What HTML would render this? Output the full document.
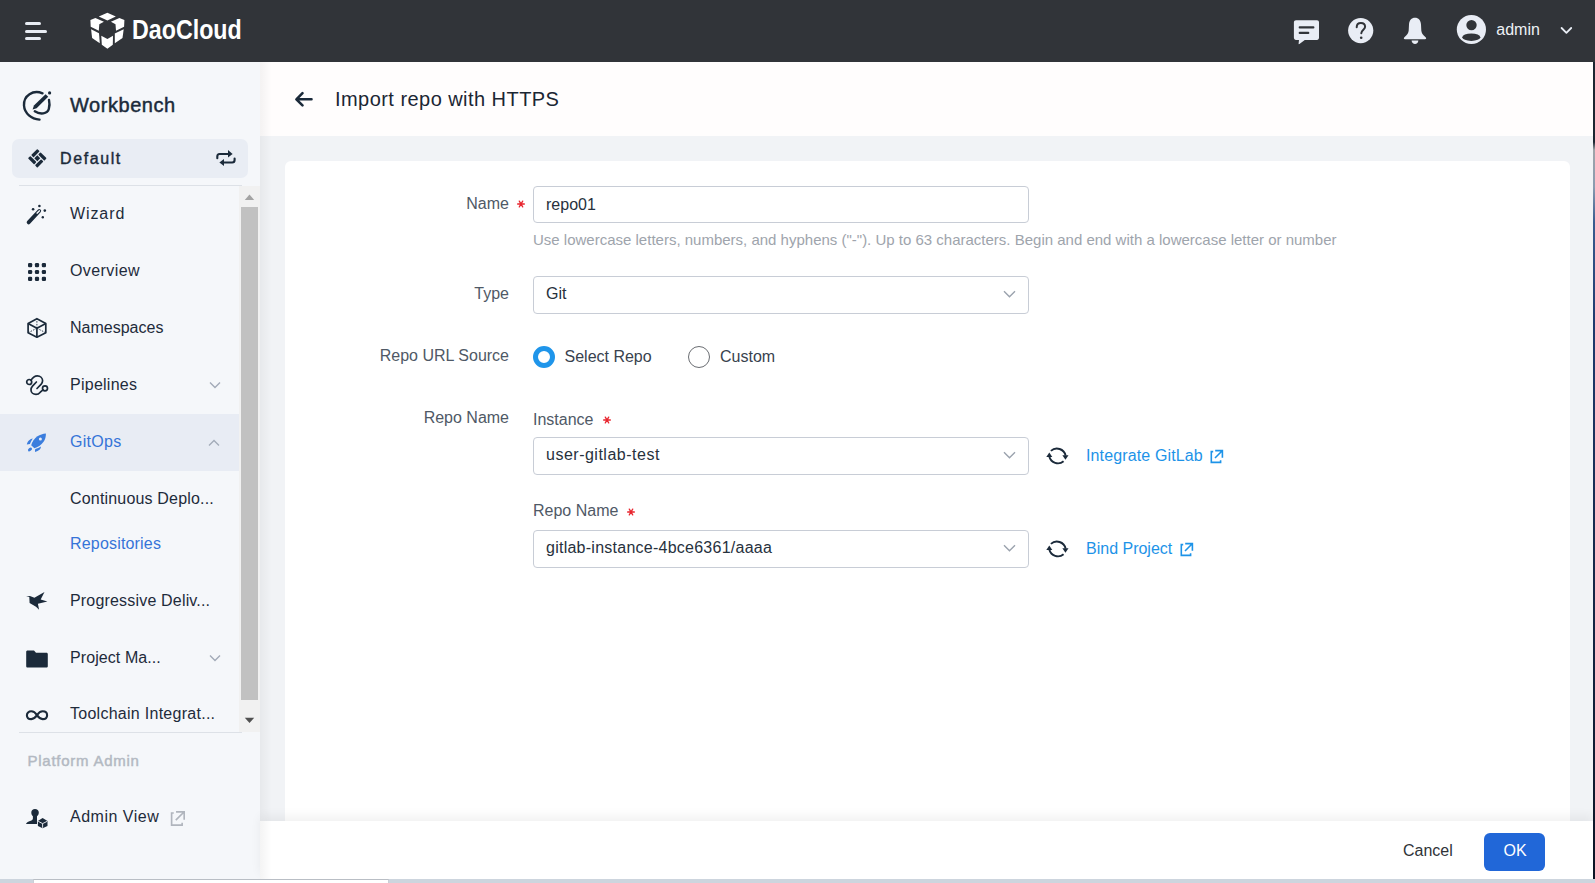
<!DOCTYPE html>
<html><head><meta charset="utf-8">
<style>
*{box-sizing:border-box;margin:0;padding:0}
html,body{width:1595px;height:883px;overflow:hidden;background:#f1f3f6;font-family:"Liberation Sans",sans-serif;}
.abs{position:absolute}
.t{position:absolute;white-space:nowrap;line-height:1}
#top{position:absolute;left:0;top:0;width:1595px;height:62px;background:#313439}
#side{position:absolute;left:0;top:62px;width:260px;height:817px;background:#f5f7fa}
#shadow{position:absolute;left:260px;top:62px;width:12px;height:817px;background:linear-gradient(to right,rgba(0,0,0,0.045),rgba(0,0,0,0))}
#hdr{position:absolute;left:260px;top:62px;width:1333px;height:74px;background:#fffdfd}
#card{position:absolute;left:285px;top:161px;width:1285px;height:700px;background:#fff;border-radius:6px}
#foot{position:absolute;left:260px;top:821px;width:1333px;height:58px;background:#fff;box-shadow:0 -5px 10px rgba(0,0,0,0.055)}
.nav{color:#1e2b3b;font-size:16px}
.lbl{color:#4f5966;font-size:16px}
.inp{position:absolute;left:533px;width:496px;height:37px;border:1px solid #c8cdd6;border-radius:4px;background:#fff}
.val{color:#27313d;font-size:16px}
.star{color:#e0313a;font-size:13px}
.link{color:#1d93e8;font-size:16px}
</style></head>
<body>
<div id="top">
  <!-- hamburger -->
  <div class="abs" style="left:25px;top:22px;width:16px;height:3px;background:#e8ecf3;border-radius:1.5px"></div>
  <div class="abs" style="left:25px;top:29.5px;width:22px;height:3px;background:#e8ecf3;border-radius:1.5px"></div>
  <div class="abs" style="left:25px;top:37px;width:16px;height:3px;background:#e8ecf3;border-radius:1.5px"></div>
  <!-- logo -->
  <svg class="abs" style="left:85px;top:8px" width="45" height="45" viewBox="0 0 45 45">
    <g fill="#fff">
      <polygon points="22.4,4.8 30.8,8.4 22.4,12.5 13.8,8.4"/>
      <polygon points="5.4,12 10.4,9.9 18.9,13.7 14.3,16.2 13.8,22.7 5.7,18.8"/>
      <polygon points="39.4,12 34.4,9.9 25.9,13.7 30.5,16.2 31,22.7 39.1,18.8"/>
      <polygon points="6.1,21.2 14,25.2 14.8,35.2 7.1,30.1"/>
      <polygon points="38.7,21.2 29.8,25.5 29.8,35.2 37.5,30.1"/>
      <polygon points="16.3,27.8 22.4,31.1 28,27.8 27.8,36.7 22.4,40.8 16.8,36.7"/>
    </g>
  </svg>
  <div class="t" id="logo" style="left:132px;top:15.5px;font-size:27.5px;font-weight:700;color:#fff;transform:scaleX(0.845);transform-origin:0 0">DaoCloud</div>
  <svg class="abs" style="left:1292px;top:18px" width="30" height="28" viewBox="0 0 30 28">
    <path d="M4,2.2 H25 C26.2,2.2 27,3 27,4.2 V19.8 C27,21 26.2,21.9 25,21.9 H12.8 L7.4,26 C6.9,26.3 6.5,26.1 6.6,25.5 L7,21.9 H4 C2.8,21.9 1.9,21 1.9,19.8 V4.2 C1.9,3 2.8,2.2 4,2.2 Z" fill="#e9edf5"/>
    <path d="M7.7,9.4 H21.4 M7.7,14.9 H16.3" stroke="#313439" stroke-width="2.1" stroke-linecap="round"/>
  </svg>
  <svg class="abs" style="left:1346px;top:16px" width="30" height="30" viewBox="0 0 30 30">
    <circle cx="14.7" cy="14.6" r="12.6" fill="#e9edf5"/>
    <path d="M10.7,11.2 C10.7,8.6 12.5,7 14.9,7 C17.3,7 19.1,8.5 19.1,10.8 C19.1,13.4 15.3,14 15.3,17.2" fill="none" stroke="#313439" stroke-width="2" stroke-linecap="round"/>
    <circle cx="15.2" cy="21.7" r="1.3" fill="#313439"/>
  </svg>
  <svg class="abs" style="left:1401px;top:16px" width="28" height="30" viewBox="0 0 28 30">
    <path d="M14,1.8 C10.5,1.8 8.2,4.5 8,8.5 L7.7,14.5 C7.5,17 6.2,18.8 3.4,21.2 C2.4,22.2 2.8,23.2 4,23.2 H24 C25.2,23.2 25.6,22.2 24.6,21.2 C21.8,18.8 20.5,17 20.3,14.5 L20,8.5 C19.8,4.5 17.5,1.8 14,1.8 Z" fill="#e9edf5"/>
    <path d="M10.6,24.6 H17.4 C17.2,26.6 15.8,28 14,28 C12.2,28 10.8,26.6 10.6,24.6 Z" fill="#e9edf5"/>
  </svg>
  <svg class="abs" style="left:1455px;top:13px" width="33" height="33" viewBox="0 0 33 33">
    <circle cx="16.4" cy="16.5" r="14.6" fill="#e9edf5"/>
    <circle cx="16.5" cy="12.1" r="5.2" fill="#313439"/>
    <ellipse cx="16.3" cy="24.2" rx="9" ry="3.7" fill="#313439"/>
  </svg>
  <div class="t" style="left:1496.3px;top:22px;font-size:16px;color:#eef1f6">admin</div>
  <svg class="abs" style="left:1559px;top:25px" width="15" height="11" viewBox="0 0 15 11" fill="none" stroke="#e9edf5" stroke-width="1.8" stroke-linecap="round" stroke-linejoin="round"><path d="M2.6,3 L7.4,7.8 L12.2,3"/></svg>
</div>

<div id="side">
  <svg class="abs" style="left:18px;top:24px" width="40" height="40" viewBox="0 0 40 40" fill="none" stroke="#1b2a3a" stroke-width="2.4" stroke-linecap="round">
    <path d="M24.5,7.3 C15,3.5 5.5,9.5 6,19.5 C6.5,27.5 13.5,33 21.5,33.6"/>
    <path d="M16.8,25.3 C22,28.8 29.5,28 30.8,23 C31.8,19.5 31.6,16.5 31,14"/>
    <polygon points="14.6,23.6 15.9,19.6 27.6,8.2 30.2,10.8 18.6,22.3" fill="#1b2a3a" stroke="none"/>
    <circle cx="31.6" cy="6.9" r="1.6" fill="#1b2a3a" stroke="none"/>
  </svg>
  <div class="t" style="left:70px;top:33.2px;font-size:20px;font-weight:400;color:#1b2a3a;-webkit-text-stroke:0.45px #1b2a3a;letter-spacing:0.55px">Workbench</div>
  <div class="abs" style="left:12px;top:77px;width:236px;height:39px;background:#e9edf4;border-radius:7px"></div>
  <svg class="abs" style="left:24px;top:82px" width="28" height="28" viewBox="-14 -14 28 28">
    <g transform="translate(-0.7,0.3) rotate(45)" fill="#1b2a3a">
      <rect x="-6.6" y="-6.6" width="3.3" height="8.7" rx="0.7"/>
      <rect x="-2.1" y="-6.6" width="8.7" height="3.3" rx="0.7"/>
      <rect x="3.3" y="-2.1" width="3.3" height="8.7" rx="0.7"/>
      <rect x="-6.6" y="3.3" width="8.7" height="3.3" rx="0.7"/>
      <rect x="-2.1" y="-2.1" width="4.2" height="4.2"/>
    </g>
  </svg>
  <div class="t" style="left:60px;top:89px;font-size:16px;font-weight:400;color:#1b2a3a;-webkit-text-stroke:0.4px #1b2a3a;letter-spacing:1.6px">Default</div>
  <svg class="abs" style="left:214px;top:84px" width="22" height="22" viewBox="0 0 22 22" fill="none" stroke="#1b2a3a" stroke-width="2.1" stroke-linecap="round">
    <path d="M3.3,12.2 V10.5 C3.3,9 4.3,8 5.6,8 H14.8"/><polygon points="14,4 18.6,8 14,11.6" fill="#1b2a3a" stroke="none"/>
    <path d="M20.6,12.6 V14 C20.6,15.5 19.6,16.5 18.2,16.5 H9.2"/><polygon points="10,12.9 5.4,16.5 10,20.1" fill="#1b2a3a" stroke="none"/>
  </svg>
  <div class="abs" style="left:19px;top:123px;width:223px;height:1px;background:#dde1e7"></div>
</div>
<div id="navclip" class="abs" style="left:0;top:186px;width:260px;height:546px;overflow:hidden">
<div class="abs" style="left:0;top:-186px;width:260px;height:900px">
<div class="abs" style="left:0;top:414px;width:239px;height:57px;background:#e8ecf4"></div>
<div class="t nav" style="left:70px;top:205.5px;letter-spacing:0.9px">Wizard</div>
<div class="t nav" style="left:70px;top:262.5px;letter-spacing:0.4px">Overview</div>
<div class="t nav" style="left:70px;top:319.5px;">Namespaces</div>
<div class="t nav" style="left:70px;top:377px;letter-spacing:0.25px">Pipelines</div>
<div class="t nav" style="left:70px;top:433.7px;color:#3574d8;letter-spacing:0.3px">GitOps</div>
<div class="t nav" style="left:70px;top:491px;letter-spacing:0.18px">Continuous Deplo...</div>
<div class="t nav" style="left:70px;top:535.5px;color:#3574d8;letter-spacing:0.18px">Repositories</div>
<div class="t nav" style="left:70px;top:592.7px;letter-spacing:0.18px">Progressive Deliv...</div>
<div class="t nav" style="left:70px;top:650px;letter-spacing:0.08px">Project Ma...</div>
<div class="t nav" style="left:70px;top:706.3px;letter-spacing:0.27px">Toolchain Integrat...</div>

<svg class="abs" style="left:22px;top:200px" width="28" height="28" viewBox="0 0 28 28">
  <path d="M6.6,22.4 L17.2,11" stroke="#1b2a3a" stroke-width="3.8" stroke-linecap="round"/>
  <path d="M15.2,13.1 L17.3,10.9" stroke="#f5f7fa" stroke-width="1.5" stroke-linecap="round"/>
  <g fill="#1b2a3a"><circle cx="11.1" cy="9.2" r="1.3"/><circle cx="17.4" cy="6" r="1.3"/><circle cx="22.8" cy="10.6" r="1.3"/><circle cx="20.8" cy="17.3" r="1.2"/></g>
</svg>
<svg class="abs" style="left:28px;top:262.5px" width="18" height="18" viewBox="0 0 18 18" fill="#1b2a3a"><rect x="0" y="0" width="4.2" height="4.2" rx="1.3"/><rect x="6.9" y="0" width="4.2" height="4.2" rx="1.3"/><rect x="13.8" y="0" width="4.2" height="4.2" rx="1.3"/><rect x="0" y="6.9" width="4.2" height="4.2" rx="1.3"/><rect x="6.9" y="6.9" width="4.2" height="4.2" rx="1.3"/><rect x="13.8" y="6.9" width="4.2" height="4.2" rx="1.3"/><rect x="0" y="13.8" width="4.2" height="4.2" rx="1.3"/><rect x="6.9" y="13.8" width="4.2" height="4.2" rx="1.3"/><rect x="13.8" y="13.8" width="4.2" height="4.2" rx="1.3"/></svg>
<svg class="abs" style="left:24px;top:314px" width="26" height="26" viewBox="0 0 26 26" fill="none" stroke="#1b2a3a" stroke-width="1.7" stroke-linejoin="round">
  <path d="M12.9,4.7 L21.8,9.4 V18.8 L12.9,23.2 L4.1,18.8 V9.4 Z"/>
  <path d="M4.1,9.4 L12.9,14.2 L21.8,9.4 M12.9,14.2 V23.2"/>
  <path d="M12.9,14.2 V5 M12.9,14.2 L4.5,18.6 M12.9,14.2 L21.4,18.6" stroke-width="0.9" stroke-dasharray="1.5 1.3"/>
</svg>
<svg class="abs" style="left:22px;top:372px" width="28" height="26" viewBox="0 0 28 26" fill="none" stroke="#1b2a3a" stroke-width="1.7" stroke-linecap="round">
  <circle cx="7.2" cy="10" r="2.5"/><circle cx="23" cy="16.3" r="2.5"/>
  <path d="M9,8.1 C10.8,5.3 13,3.8 15.3,3.8 C18.3,3.8 20.6,6 20.6,8.8 C20.6,10.3 20,11.3 19,12.4 L15,16.5"/>
  <path d="M14.4,10 L10.5,14.2 C9.5,15.3 9,16.6 9,18 C9,20.6 11.3,22.4 14,22.4 C15.8,22.4 17.2,21.5 18.3,20.2 L21,17.8"/>
</svg>
<svg class="abs" style="left:22px;top:428px" width="30" height="28" viewBox="0 0 30 28" fill="#3b7ddd">
  <path d="M23.9,5.4 C21,5.6 17.8,6.7 15.5,8.3 C12.5,10.5 10,14 9.2,17.2 L12.4,20.3 C15.6,19.5 19.2,17 21.6,13.8 C23.2,11.6 24,8.2 23.9,5.4 Z"/>
  <circle cx="18.4" cy="11.1" r="1.5" fill="#e8ecf4"/>
  <path d="M4.8,16.5 C5.2,14.5 6,13.2 7.2,12.2 C8.3,11.3 9.5,10.7 10.8,10.5 C9.6,12.2 8.6,14.2 7.9,15.9 Z"/>
  <path d="M13,24.1 C12.9,22.8 13,21.8 13.3,20.9 C15.3,20.5 17.3,19.6 19,18.4 C18.8,19.6 18.5,20.6 17.8,21.6 C16.4,22.9 14.8,23.6 13,24.1 Z"/>
  <ellipse cx="8" cy="21.4" rx="2.3" ry="1.5" transform="rotate(-40 8 21.4)"/>
</svg>
<svg class="abs" style="left:22px;top:587px" width="30" height="28" viewBox="0 0 30 28" fill="#1b2a3a">
  <path d="M4.1,9.4 L7.9,8.9 L12.4,10.8 L22.5,5.1 L18.7,12.4 L25.4,14.4 L15.9,16.8 L17.1,22.8 L14,19.7 L7.6,15.9 L7.3,10.1 Z"/>
</svg>
<svg class="abs" style="left:26px;top:649.8px" width="22" height="18" viewBox="0 0 22 18" fill="#1b2a3a">
  <path d="M1.5,0.5 H8 L10,2.8 H20.5 C21.2,2.8 21.8,3.4 21.8,4.1 V16.2 C21.8,16.9 21.2,17.5 20.5,17.5 H1.5 C0.8,17.5 0.2,16.9 0.2,16.2 V1.8 C0.2,1.1 0.8,0.5 1.5,0.5 Z"/>
</svg>
<svg class="abs" style="left:25px;top:707px" width="24" height="16" viewBox="0 0 24 16" fill="none" stroke="#1b2a3a" stroke-width="2.1">
  <path d="M12,8.2 C10,5.2 8.2,4.3 6.3,4.3 C3.6,4.3 1.9,6 1.9,8.2 C1.9,10.4 3.6,12.1 6.3,12.1 C8.2,12.1 10,11.2 12,8.2 C14,5.2 15.8,4.3 17.7,4.3 C20.4,4.3 22.1,6 22.1,8.2 C22.1,10.4 20.4,12.1 17.7,12.1 C15.8,12.1 14,11.2 12,8.2 Z"/>
</svg>
<svg class="abs" style="left:208px;top:380px" width="14" height="10" viewBox="0 0 14 10" fill="none" stroke="#a3abb8" stroke-width="1.4"><path d="M2,2.5 L7,7.5 L12,2.5"/></svg>
<svg class="abs" style="left:206.5px;top:437.5px" width="14" height="10" viewBox="0 0 14 10" fill="none" stroke="#a3abb8" stroke-width="1.4"><path d="M2,7.5 L7,2.5 L12,7.5"/></svg>
<svg class="abs" style="left:208px;top:653px" width="14" height="10" viewBox="0 0 14 10" fill="none" stroke="#a3abb8" stroke-width="1.4"><path d="M2,2.5 L7,7.5 L12,2.5"/></svg>
</div></div>
<div class="abs" style="left:239px;top:186px;width:21px;height:546px;background:#f1f1f1"></div>
<div class="abs" style="left:241px;top:207px;width:17px;height:493px;background:#c1c1c1"></div>
<svg class="abs" style="left:239px;top:186px" width="21" height="546" viewBox="0 0 21 546">
  <polygon points="10.5,8.6 15.2,14 5.8,14" fill="#a3a3a3"/>
  <polygon points="5.8,531.7 15.2,531.7 10.5,537" fill="#505050"/>
</svg>
<div class="abs" style="left:19px;top:732px;width:223px;height:1px;background:#dde1e7"></div>
<div class="t" style="left:27.5px;top:752.8px;font-size:15px;font-weight:400;color:#b3b9c2;-webkit-text-stroke:0.45px #b3b9c2;letter-spacing:0.75px">Platform Admin</div>
<div class="t nav" style="left:70px;top:808.7px;letter-spacing:0.5px">Admin View</div>
<svg class="abs" style="left:22px;top:804px" width="30" height="28" viewBox="0 0 30 28">
  <path d="M9.3,8.6 C9.3,6.3 10.8,5 13,5 C15.2,5 16.8,6.4 16.8,8.6 C16.8,10.4 16.1,11.5 15,12.2 V20 H4 C4.3,18.6 6.5,17.3 9.4,16.6 C10.3,16.2 10.8,15.5 10.9,14.6 V12.2 C9.9,11.5 9.3,10.3 9.3,8.6 Z" fill="#1b2a3a"/>
  <path d="M20.6,14.1 L25.5,17 V22 L20.6,24.2 L15.9,22 V17 Z" fill="#1b2a3a"/>
  <path d="M16.2,17.3 L20.6,19.6 L25.2,17.3 M20.6,19.6 V23.8" stroke="#f5f7fa" stroke-width="0.9" fill="none"/>
</svg>
<svg class="abs" style="left:169px;top:809.5px" width="17" height="17" viewBox="0 0 15 15" fill="none" stroke="#b0b5bd" stroke-width="1.45"><path d="M4.2,2.6 H2.3 V13.4 H11.6 V11.2"/><path d="M6,9 L13.2,1.8 M6.2,1.6 H13.4 V8.7"/></svg>
<div id="hdr"></div>
<div id="card"></div>

<svg class="abs" style="left:293px;top:90px" width="22" height="18" viewBox="0 0 22 18" fill="none" stroke="#1b2a3a" stroke-width="2.6" stroke-linecap="round" stroke-linejoin="round">
  <path d="M18.5,9.3 H4 M9.5,3.2 L3.4,9.3 L9.5,15.4"/>
</svg>
<div class="t" style="left:335px;top:89.2px;font-size:20px;color:#1b2633;letter-spacing:0.45px">Import repo with HTTPS</div>
<div class="t lbl" style="right:1086px;top:196px">Name</div>
<svg class="abs" style="left:516.5px;top:200.4px" width="8" height="8" viewBox="-4 -4 8 8" stroke="#e8262f" stroke-width="1.3" stroke-linecap="round"><path d="M-3.4,0 H3.4 M-1.7,-2.9 L1.7,2.9 M1.7,-2.9 L-1.7,2.9"/></svg>

<div class="inp" style="top:186px"></div>
<div class="t val" style="left:546px;top:197px">repo01</div>
<div class="t" style="left:533px;top:231.6px;font-size:15px;color:#9ea4ac">Use lowercase letters, numbers, and hyphens ("-"). Up to 63 characters. Begin and end with a lowercase letter or number</div>
<div class="t lbl" style="right:1086px;top:286px">Type</div>
<div class="inp" style="top:276px;height:38px"></div>
<div class="t val" style="left:546px;top:286px">Git</div>
<svg class="abs" style="left:1003.2px;top:290px" width="13" height="9" viewBox="0 0 13 9" fill="none" stroke="#9aa2ad" stroke-width="1.4"><path d="M1,1.3 L6.5,6.8 L12,1.3"/></svg>

<div class="t lbl" style="right:1086px;top:348px">Repo URL Source</div>
<div class="abs" style="left:533px;top:346px;width:22px;height:22px;border-radius:50%;border:5.6px solid #1f95ea;background:#fff"></div>
<div class="t val" style="left:564.5px;top:349px;color:#39424e">Select Repo</div>
<div class="abs" style="left:688px;top:346px;width:22px;height:22px;border-radius:50%;border:1.4px solid #6a6d72;background:#fff"></div>
<div class="t val" style="left:720px;top:349px;color:#39424e">Custom</div>
<div class="t lbl" style="right:1086px;top:410px">Repo Name</div>
<div class="t lbl" style="left:533px;top:411.6px">Instance</div>
<svg class="abs" style="left:602.5px;top:415.5px" width="8" height="8" viewBox="-4 -4 8 8" stroke="#e8262f" stroke-width="1.3" stroke-linecap="round"><path d="M-3.4,0 H3.4 M-1.7,-2.9 L1.7,2.9 M1.7,-2.9 L-1.7,2.9"/></svg>

<div class="inp" style="top:437px;height:38px"></div>
<div class="t val" style="left:546px;top:446.7px;letter-spacing:0.5px">user-gitlab-test</div>
<svg class="abs" style="left:1003.2px;top:451px" width="13" height="9" viewBox="0 0 13 9" fill="none" stroke="#9aa2ad" stroke-width="1.4"><path d="M1,1.3 L6.5,6.8 L12,1.3"/></svg>
<svg class="abs" style="left:1042px;top:442px" width="30" height="28" viewBox="0 0 30 28" fill="none" stroke="#1b2a3a" stroke-width="1.9">
<path d="M8.9,8.9 A8.9,8.9 0 0 1 23.6,13.6"/><polygon points="20.4,13.3 26.5,13.3 23.45,17.7" fill="#1b2a3a" stroke="none"/>
<path d="M21.6,19.3 A8.9,8.9 0 0 1 7.3,14.6"/><polygon points="4.3,14.9 10.3,14.9 7.3,10.6" fill="#1b2a3a" stroke="none"/>
</svg>

<div class="t link" style="left:1086px;top:447.5px;letter-spacing:0.13px">Integrate GitLab</div>
<svg class="abs" style="left:1208.5px;top:449px" width="15" height="15" viewBox="0 0 15 15" fill="none" stroke="#1d93e8" stroke-width="1.6"><path d="M4.2,2.6 H2.3 V13.4 H11.6 V11.2"/><path d="M6,9 L13.2,1.8 M6.2,1.6 H13.4 V8.7"/></svg>

<div class="t lbl" style="left:533px;top:503.3px">Repo Name</div>
<svg class="abs" style="left:626.8px;top:507.5px" width="8" height="8" viewBox="-4 -4 8 8" stroke="#e8262f" stroke-width="1.3" stroke-linecap="round"><path d="M-3.4,0 H3.4 M-1.7,-2.9 L1.7,2.9 M1.7,-2.9 L-1.7,2.9"/></svg>

<div class="inp" style="top:530px;height:38px"></div>
<div class="t val" style="left:546px;top:540px;letter-spacing:0.25px">gitlab-instance-4bce6361/aaaa</div>
<svg class="abs" style="left:1003.2px;top:544px" width="13" height="9" viewBox="0 0 13 9" fill="none" stroke="#9aa2ad" stroke-width="1.4"><path d="M1,1.3 L6.5,6.8 L12,1.3"/></svg>
<svg class="abs" style="left:1042px;top:535px" width="30" height="28" viewBox="0 0 30 28" fill="none" stroke="#1b2a3a" stroke-width="1.9">
<path d="M8.9,8.9 A8.9,8.9 0 0 1 23.6,13.6"/><polygon points="20.4,13.3 26.5,13.3 23.45,17.7" fill="#1b2a3a" stroke="none"/>
<path d="M21.6,19.3 A8.9,8.9 0 0 1 7.3,14.6"/><polygon points="4.3,14.9 10.3,14.9 7.3,10.6" fill="#1b2a3a" stroke="none"/>
</svg>

<div class="t link" style="left:1086px;top:541.2px">Bind Project</div>
<svg class="abs" style="left:1179px;top:542px" width="15" height="15" viewBox="0 0 15 15" fill="none" stroke="#1d93e8" stroke-width="1.6"><path d="M4.2,2.6 H2.3 V13.4 H11.6 V11.2"/><path d="M6,9 L13.2,1.8 M6.2,1.6 H13.4 V8.7"/></svg>

<div id="foot">
  <div class="t" style="left:1143px;top:22.3px;font-size:16px;color:#2f3338">Cancel</div>
  <div class="abs" style="left:1224px;top:12px;width:61px;height:38px;background:#2167d8;border-radius:6px"></div>
  <div class="t" style="left:1243.5px;top:22.3px;font-size:16px;color:#fff">OK</div>
</div>


<div id="shadow"></div>
<div class="abs" style="left:0;top:879px;width:1595px;height:4px;background:#cdd5de"></div>
<div class="abs" style="left:33px;top:879px;width:356px;height:4px;background:#fff;border-top:1px solid #b9bec5;border-left:1px solid #c9ced5;border-right:1px solid #c9ced5"></div>
<div class="abs" style="left:1593px;top:62px;width:2px;height:817px;background:linear-gradient(to bottom,#1c2632 0px,#1c2632 80px,#a0a4aa 88px,#8a9bb0 125px,#3a5c90 160px,#1f3a6e 260px,#16284a 500px,#0c1424 817px)"></div>
</body></html>
